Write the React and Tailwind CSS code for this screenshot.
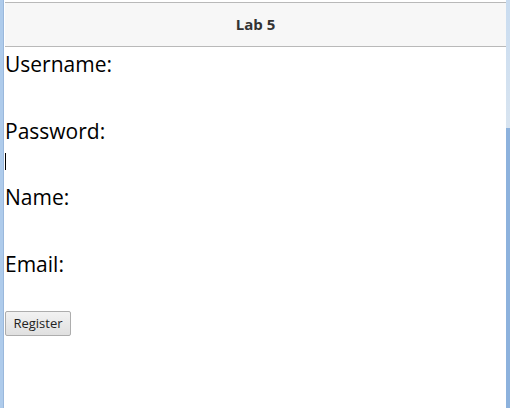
import React from 'react'

const fields = ['Username:', 'Password:', 'Name:', 'Email:']

function App() {
  return (
    <div className="w-[510px] h-[408px] flex bg-white overflow-hidden" style={{ fontFamily: '"Open Sans", "Noto Sans", sans-serif' }}>
      <div className="w-[4px] h-full bg-[#aecbeb] border-r border-[#9ab8dc]" />
      <div className="w-[1px] h-full bg-white" />
      <div className="flex-1 flex flex-col">
        <div className="h-[2px] bg-white" />
        <div className="h-[45px] bg-[#f7f7f7] border-y border-[#b9b9b9] flex items-center justify-center">
          <span className="text-[15px] font-bold text-[#333333]">Lab 5</span>
        </div>
        <div className="flex flex-col pt-[3px] text-black">
          {fields.map((label, i) => (
            <div key={label} className="flex flex-col">
              <div className="h-[28px] leading-[28px] text-[21px]">{label}</div>
              <div className="h-[38.5px] relative">
                {i === 1 && <div className="absolute left-0 top-[8px] w-[1px] h-[17px] bg-black" />}
              </div>
            </div>
          ))}
          <div className="mt-[-6px]">
            <button className="h-[25px] w-[66px] text-[13px] text-[#222] border border-[#adadad] rounded-[2px] bg-gradient-to-b from-[#f2f2f2] to-[#e0e0e0]">
              Register
            </button>
          </div>
        </div>
      </div>
      <div className="w-[4px] h-full flex flex-col">
        <div className="h-[128px] bg-gradient-to-b from-[#c9dcf0] to-[#d8e4f0]" />
        <div className="flex-1 bg-[#8db2dd]" />
      </div>
    </div>
  )
}

export default App
